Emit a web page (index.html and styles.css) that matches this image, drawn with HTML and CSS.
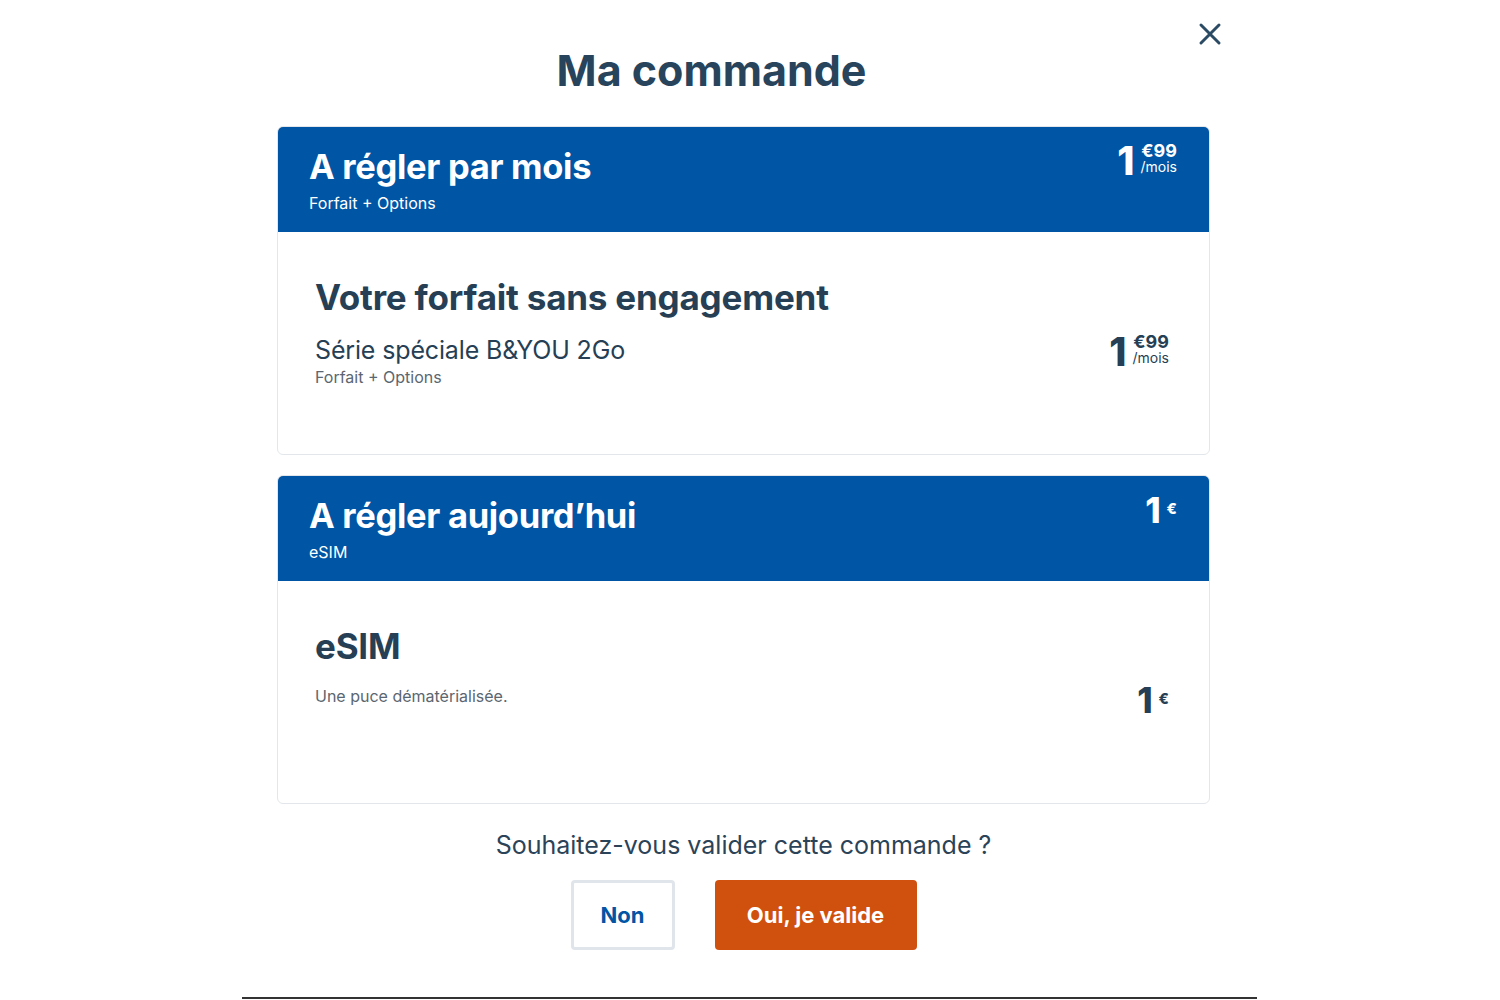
FILE: index.html
```html
<!DOCTYPE html>
<html>
<head>
<meta charset="utf-8">
<title>Ma commande</title>
<link rel="stylesheet" href="styles.css">
</head>
<body>
<section class="order-modal">
  <header class="order-head">
    <h1>Ma commande</h1>
    <button class="order-close" title="Fermer">
      <svg width="24" height="24" viewBox="0 0 24 24"><path d="M3 3 L21 21 M21 3 L3 21" stroke="#2b4a63" stroke-width="3" stroke-linecap="round"/></svg>
    </button>
  </header>

  <div class="order-card">
    <div class="card-head">
      <div>
        <h2>A régler par mois</h2>
        <p class="card-sub">Forfait + Options</p>
      </div>
      <div class="price price-head">
        <span class="price-int">1</span>
        <span class="price-dec"><b>€99</b><small>/mois</small></span>
      </div>
    </div>
    <div class="card-body">
      <h3>Votre forfait sans engagement</h3>
      <div class="line">
        <div>
          <p class="line-name">Série spéciale B&amp;YOU 2Go</p>
          <p class="line-sub">Forfait + Options</p>
        </div>
        <div class="price price-body">
          <span class="price-int">1</span>
          <span class="price-dec"><b>€99</b><small>/mois</small></span>
        </div>
      </div>
    </div>
  </div>

  <div class="order-card">
    <div class="card-head">
      <div>
        <h2>A régler aujourd’hui</h2>
        <p class="card-sub">eSIM</p>
      </div>
      <div class="price price-head price-euro">
        <span class="price-int">1</span>
        <span class="price-cur">€</span>
      </div>
    </div>
    <div class="card-body body-esim">
      <h3>eSIM</h3>
      <div class="line">
        <p class="line-desc">Une puce dématérialisée.</p>
        <div class="price price-body price-euro">
          <span class="price-int">1</span>
          <span class="price-cur">€</span>
        </div>
      </div>
    </div>
  </div>

  <p class="order-question">Souhaitez-vous valider cette commande ?</p>
  <div class="order-actions">
    <button class="btn btn-no">Non</button>
    <button class="btn btn-yes">Oui, je valide</button>
  </div>
</section>
</body>
</html>
```

FILE: styles.css
```css
/* page */
body {
  margin: 0;
  background: #fff;
  font-family: Inter, "Open Sans", sans-serif;
  color: #263f55;
}

p, h1, h2, h3 {
  margin: 0;
}

.order-modal {
  width: 1015px;
  box-sizing: border-box;
  margin-left: 242px;
  padding: 0 47px 47px 35px;
  border-bottom: 2px solid #333;
}

/* title + close */
.order-head {
  display: flex;
  align-items: flex-start;
  margin-right: -12px;
  height: 126px;
}

.order-head h1 {
  flex: 1;
  text-align: center;
  font-size: 43px;
  line-height: 56px;
  padding-top: 42px;
  font-weight: 700;
  color: #28445c;
}

.order-close {
  width: 76px;
  border: none;
  background: transparent;
  padding: 22px 0 0;
  text-align: right;
  cursor: pointer;
}

/* cards */
.order-card {
  border: 1px solid #e3e7eb;
  border-radius: 6px;
  overflow: hidden;
  margin-bottom: 20px;
}

.card-head {
  background: #0055a4;
  color: #fff;
  display: flex;
  justify-content: space-between;
  padding: 18px 32px 17px 31px;
  height: 105px;
  box-sizing: border-box;
}

.card-head h2 {
  font-size: 34.5px;
  line-height: 44px;
  font-weight: 700;
  letter-spacing: -0.3px;
}

.card-sub {
  font-size: 16px;
  line-height: 22px;
  margin-top: 3px;
}

.card-body {
  padding: 43px 40px 0 37px;
  height: 222px;
  box-sizing: border-box;
}

.card-body h3 {
  font-size: 35px;
  line-height: 44px;
  font-weight: 700;
  letter-spacing: -0.2px;
}

.line {
  display: flex;
  justify-content: space-between;
  align-items: flex-start;
  margin-top: 15px;
}

.line-name {
  font-size: 25px;
  line-height: 32px;
  font-weight: 400;
  letter-spacing: -0.15px;
}

.line-sub {
  font-size: 16px;
  line-height: 22px;
  color: #5b6670;
}

.body-esim .line {
  margin-top: 17px;
}

.line-desc {
  font-size: 16px;
  line-height: 22px;
  color: #5b6670;
}

/* prices */
.price {
  display: flex;
  align-items: flex-start;
  gap: 6px;
}

.price-int {
  font-weight: 800;
  font-size: 39px;
  line-height: 36px;
}

.price-dec {
  display: flex;
  flex-direction: column;
  align-items: flex-end;
}

.price-dec b {
  font-size: 18px;
  line-height: 16px;
}

.price-dec small {
  font-size: 14px;
  line-height: 15px;
}

.price-head {
  margin-top: -2px;
}

.price-euro .price-int {
  font-size: 35px;
  line-height: 34px;
}

.price-cur {
  font-weight: 800;
  font-size: 15px;
  line-height: 16px;
  padding-top: 8px;
}

.price-head.price-euro {
  margin-top: -1px;
}

.body-esim .price-body {
  margin-top: -2px;
}

/* question + buttons */
.order-question {
  text-align: center;
  font-size: 25px;
  line-height: 32px;
  margin-top: 25px;
  color: #2b4358;
}

.order-actions {
  display: flex;
  justify-content: center;
  gap: 40px;
  margin-top: 19px;
}

.btn {
  font-family: Inter, sans-serif;
  font-size: 22px;
  font-weight: 700;
  height: 70px;
  border-radius: 4px;
  cursor: pointer;
}

.btn-no {
  width: 104px;
  background: #fff;
  color: #0055a4;
  border: 3px solid #dfe5ea;
}

.btn-yes {
  width: 202px;
  background: #d0500e;
  color: #fff;
  border: none;
}
```
